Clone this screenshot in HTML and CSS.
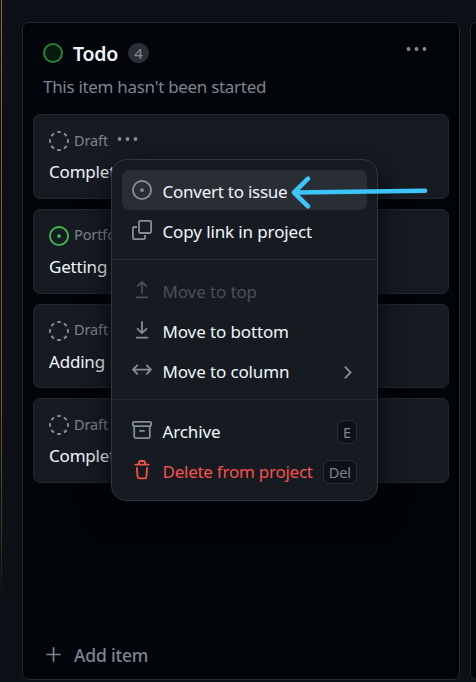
FILE: index.html
```html
<!DOCTYPE html>
<html lang="en">
<head>
<meta charset="utf-8">
<title>Project board</title>
<link rel="stylesheet" href="styles.css">
</head>
<body>
<svg class="defs" aria-hidden="true">
  <symbol id="draft" viewBox="0 0 20 20"><circle cx="10" cy="10" r="9" pathLength="80" fill="none" stroke="currentColor" stroke-width="1.9" stroke-dasharray="5.4 4.6" stroke-dashoffset="2.7"/></symbol>
  <symbol id="issue" viewBox="0 0 16 16"><path fill="currentColor" d="M8 9.5a1.5 1.5 0 1 0 0-3 1.5 1.5 0 0 0 0 3Z"/><path fill="currentColor" d="M8 0a8 8 0 1 1 0 16A8 8 0 0 1 8 0ZM1.5 8a6.5 6.5 0 1 0 13 0 6.5 6.5 0 0 0-13 0Z"/></symbol>
  <symbol id="dots" viewBox="0 0 20 4"><g fill="currentColor"><circle cx="2" cy="2" r="1.9"/><circle cx="10" cy="2" r="1.9"/><circle cx="18" cy="2" r="1.9"/></g></symbol>
</svg>
<main class="board">
  <section class="column">
    <header class="head">
      <div class="title-row">
        <span class="status"></span>
        <h2>Todo</h2>
        <span class="count">4</span>
        <svg class="dots more"><use href="#dots"/></svg>
      </div>
      <p>This item hasn't been started</p>
    </header>
    <div class="cards">
      <article class="card">
        <div class="meta"><svg class="icon"><use href="#draft"/></svg><span>Draft</span><svg class="dots"><use href="#dots"/></svg></div>
        <div class="name">Complet</div>
      </article>
      <article class="card">
        <div class="meta"><svg class="icon open"><use href="#issue"/></svg><span>Portfo</span></div>
        <div class="name">Getting</div>
      </article>
      <article class="card">
        <div class="meta"><svg class="icon"><use href="#draft"/></svg><span>Draft</span></div>
        <div class="name">Adding</div>
      </article>
      <article class="card">
        <div class="meta"><svg class="icon"><use href="#draft"/></svg><span>Draft</span></div>
        <div class="name">Complet</div>
      </article>
    </div>
    <footer class="add">
      <svg class="plus" viewBox="0 0 15 15"><path d="M7.5 .3v14.4M.3 7.5h14.4" stroke="currentColor" stroke-width="1.7"/></svg>
      <span>Add item</span>
    </footer>
  </section>
  <section class="column next"></section>
</main>

<nav class="menu">
  <div class="item active"><svg class="icon"><use href="#issue"/></svg><span class="tight">Convert to issue</span></div>
  <div class="item"><svg class="icon" viewBox="0 0 20 20" fill="none" stroke="currentColor" stroke-width="1.8"><rect x="7" y=".9" width="12.1" height="12.1" rx="1.2"/><path d="M5 7H2.1Q.9 7 .9 8.2v9.7q0 1.2 1.2 1.2h9.7q1.2 0 1.2-1.2V15"/></svg><span>Copy link in project</span></div>
  <hr>
  <div class="item off"><svg class="icon" viewBox="0 0 20 20" fill="none" stroke="currentColor" stroke-width="1.8" stroke-linecap="round" stroke-linejoin="round"><path d="M10 13V2M5.6 6.2 10 1.8l4.4 4.4M4.6 17.3h10.8"/></svg><span>Move to top</span></div>
  <div class="item"><svg class="icon" viewBox="0 0 20 20" fill="none" stroke="currentColor" stroke-width="1.8" stroke-linecap="round" stroke-linejoin="round"><path d="M10 2v11M5.6 8.8l4.4 4.4 4.4-4.4M4.6 17.6h10.8"/></svg><span>Move to bottom</span></div>
  <div class="item"><svg class="icon" viewBox="0 0 20 20" fill="none" stroke="currentColor" stroke-width="1.8" stroke-linecap="round" stroke-linejoin="round"><path d="M1.2 9.6h17.6M5.2 5.4 1 9.6l4.2 4.2M14.8 5.4 19 9.6l-4.2 4.2"/></svg><span>Move to column</span><svg class="chevron" viewBox="0 0 8 13" fill="none" stroke="currentColor" stroke-width="1.8"><path d="M.8.7 6.6 6.5.8 12.3"/></svg></div>
  <hr>
  <div class="item"><svg class="icon" viewBox="0 0 20 20" fill="none" stroke="currentColor" stroke-width="1.8"><rect x=".9" y="1.9" width="18.2" height="4.2" rx="1"/><path d="M2.2 6.5v10.1q0 1.5 1.5 1.5h12.6q1.5 0 1.5-1.5V6.5M8 10.9h4" stroke-linecap="round"/></svg><span>Archive</span><kbd>E</kbd></div>
  <div class="item danger"><svg class="icon" viewBox="0 0 20 20" fill="none" stroke="currentColor" stroke-width="1.8" stroke-linecap="round"><path d="M3.3 4.6h13.4M7 4.3V2.7Q7 1 8.6 1h2.8Q13 1 13 2.7v1.6M4.9 8l.7 9q.1 1.3 1.4 1.3h6q1.3 0 1.4-1.3l.7-9"/></svg><span class="tight">Delete from project</span><kbd>Del</kbd></div>
</nav>

<svg class="arrow" viewBox="0 0 140 40"><path d="M137 17.8 7 19.5M20 5.7 6 19.5l14 13.9" fill="none" stroke="#3bc5fb" stroke-width="4.6" stroke-linecap="round" stroke-linejoin="round"/></svg>
</body>
</html>
```
FILE: styles.css
```css
* { box-sizing: border-box; }

body {
  margin: 0;
  width: 476px;
  height: 682px;
  overflow: hidden;
  position: relative;
  background: #0d1117;
  color: #f0f6fc;
  font: 17px/24px "Noto Sans", "Open Sans", sans-serif;
  letter-spacing: -0.12px;
}

body::before {
  content: "";
  position: absolute;
  left: 1px;
  top: 0;
  width: 1px;
  height: 682px;
  background: linear-gradient(#8c6c3c, #715732 60%, #3b2d1d 80%, #15130f 88%);
}

.defs { position: absolute; width: 0; height: 0; }
svg { display: block; flex: none; }

.board {
  display: grid;
  grid-template-columns: 438px 1fr;
  gap: 10px;
  height: 682px;
  padding: 22px 0 2px 22px;
}

.column {
  display: flex;
  flex-direction: column;
  min-width: 0;
  border: 1px solid #25282d;
  border-radius: 7px;
  background: #010409;
}
.next { border-right: 0; border-radius: 6px 0 0 6px; }

.head { height: 91px; padding: 18px 20px 0; }
.title-row { display: flex; align-items: center; height: 24px; }

.status {
  width: 20px;
  height: 20px;
  border: 2px solid #238636;
  border-radius: 50%;
  background: #08190f;
}

h2 { margin: 2px 0 0 10px; font-size: 19.5px; font-weight: 600; line-height: 24px; letter-spacing: -0.25px; }

.count {
  width: 21px;
  height: 20px;
  margin-left: 10px;
  border-radius: 10px;
  background: #2a2f37;
  color: #848d97;
  font-size: 15px;
  line-height: 20px;
  text-align: center;
}

.dots { width: 21px; height: 4px; margin: -2px 0 0 9px; color: #848d97; }
.more { margin: -8px 12px 0 auto; }
.head p { margin: 10px 0 0; color: #7d8590; font-size: 17px; letter-spacing: -0.3px; }

.cards { display: flex; flex-direction: column; gap: 10px; padding: 0 10px; }
.card {
  height: 84.8px;
  padding: 15px;
  border: 1px solid #23272d;
  border-radius: 7px;
  background: #161b22;
}

.icon { width: 20px; height: 20px; color: #848d97; }
.icon.open { color: #3fb950; }
.meta { display: flex; align-items: center; height: 20px; color: #7d8590; font-size: 14.5px; }
.meta span { margin-top: -1px; }
.meta .icon { position: relative; top: 1px; margin-right: 5px; }
.name { margin-top: 10px; font-size: 17px; letter-spacing: -0.2px; }

.add {
  display: flex;
  align-items: center;
  gap: 13px;
  margin-top: auto;
  padding: 0 0 12px 23px;
  color: #7d8590;
  font-size: 17.5px;
  font-weight: 500;
  letter-spacing: -0.2px;
}
.plus { width: 15px; height: 15px; margin-top: -2px; }

.menu {
  position: absolute;
  left: 111px;
  top: 159px;
  width: 267px;
  height: 342px;
  padding: 10px;
  border: 1px solid #30363d;
  border-radius: 15px;
  background: #161b22;
  box-shadow: 0 10px 30px rgba(1, 4, 9, .85);
}

.item { display: flex; align-items: center; height: 40px; padding: 0 10px; border-radius: 7px; }
.item.active { background: #292e35; }
.item span { margin: 4px 0 0 10.5px; white-space: nowrap; }
.item .tight { letter-spacing: -0.25px; }
.item.off { color: #484f58; }
.item.off .icon { color: #484f58; }
.item.danger, .item.danger .icon { color: #f85149; }

hr { width: auto; height: 1px; margin: 9px -10px 10px; border: 0; background: #23282f; }

.chevron { width: 8px; height: 13px; margin: 4px 5px 0 auto; color: #848d97; }

.item kbd {
  height: 24px;
  min-width: 20px;
  margin: 4px 0 0 auto;
  padding: 0 5px;
  border: 1px solid #2b3037;
  border-radius: 7px;
  background: #0d1117;
  color: #7d8590;
  font: 14.5px/23px "Noto Sans", sans-serif;
  text-align: center;
}

.arrow { position: absolute; left: 288px; top: 173px; width: 140px; height: 40px; }
```
